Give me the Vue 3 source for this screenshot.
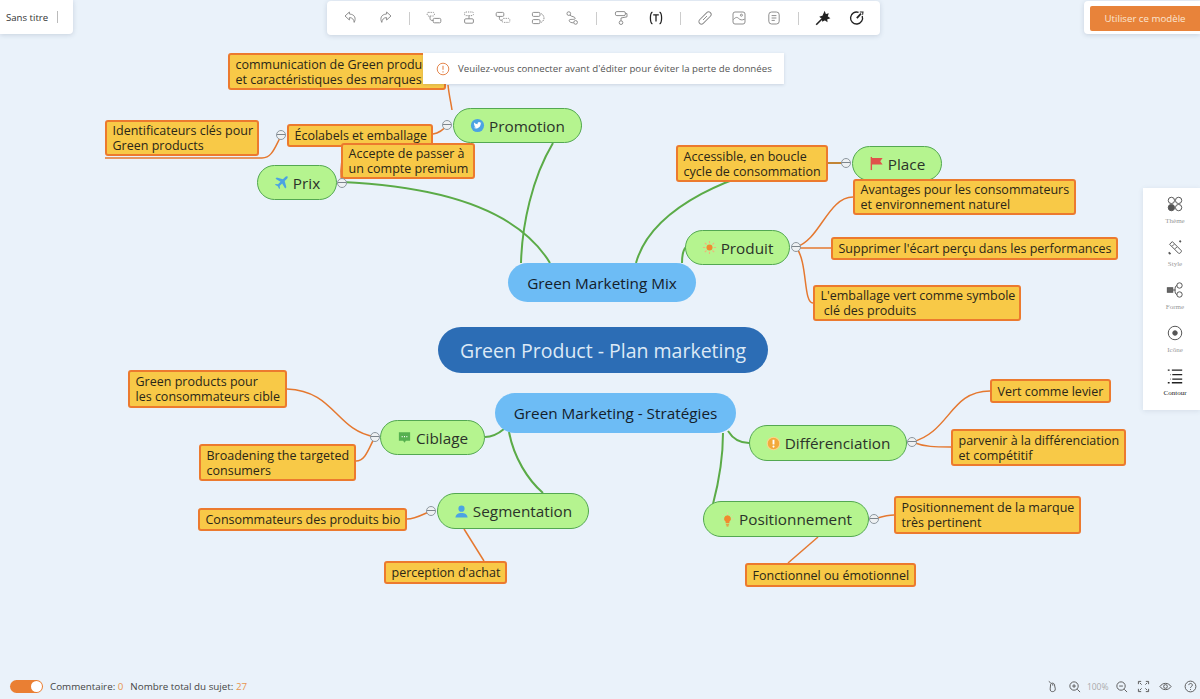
<template>
  <div class="page">
    <div class="canvas">
      <svg class="links" width="1200" height="699" viewBox="0 0 1200 699" fill="none">
        <path v-for="d in greenLinks" :key="d" :d="d" stroke="#5bab47" stroke-width="2" />
        <path v-for="d in orangeLinks" :key="d" :d="d" stroke="#e5782f" stroke-width="1.5" />
      </svg>

      <div
        v-for="t in topics"
        :key="t.text"
        :class="['topic', t.kind]"
        :style="{ left: t.x + 'px', top: t.y + 'px', width: t.w + 'px', height: t.h + 'px' }"
      >
        <svg v-if="t.icon === 'twitter'" class="mark" viewBox="0 0 16 16">
          <circle cx="8" cy="8" r="7" fill="#4ba3e3" />
          <path d="M12.3 5.2c-.3.2-.7.3-1 .3.4-.2.6-.5.8-.9-.3.2-.7.3-1.1.4a1.7 1.7 0 0 0-2.9 1.6C6.7 6.5 5.4 5.8 4.5 4.7c-.5.8-.2 1.8.5 2.3-.3 0-.5-.1-.8-.2 0 .8.6 1.500 1.400 1.700-.3.1-.5.1-.8 0 .2.700.9 1.200 1.600 1.200-.7.500-1.500.8-2.500.7 2.300 1.500 7.200.9 7.600-4.600.3-.2.6-.4.8-.6z" fill="#fff" />
        </svg>
        <svg v-else-if="t.icon === 'plane'" class="mark" viewBox="0 0 16 16">
          <path d="M14.5 1.6c-.8-.6-2-.1-2.8.7L9.500 4.500 3 2.700 1.600 4l5.300 3.200-2.600 2.700-2.400-.4L1 10.400l3 1.500L5.500 15l.9-.9-.4-2.500 2.700-2.500 3.200 5.300 1.300-1.400-1.800-6.500 2.200-2.200c.8-.8 1.300-1.800.9-2.700z" fill="#4ba3e3" />
        </svg>
        <svg v-else-if="t.icon === 'flag'" class="mark" viewBox="0 0 16 16">
          <path d="M2.5 1v14" stroke="#e0524a" stroke-width="1.5" />
          <path d="M3 2h11.500l-2.500 3.500 2.500 3.500H3z" fill="#e0524a" />
        </svg>
        <svg v-else-if="t.icon === 'sun'" class="mark" viewBox="0 0 16 16">
          <circle cx="8" cy="8" r="3.2" fill="#f08a2e" />
          <path d="M8 1v2.500M8 12.500V15M1 8h2.500M12.500 8H15M3 3l1.800 1.800M11.200 11.200 13 13M3 13l1.800-1.800M11.200 4.800 13 3" stroke="#f3b27a" stroke-width="1.2" />
        </svg>
        <svg v-else-if="t.icon === 'chat'" class="mark" viewBox="0 0 16 16">
          <path d="M2 2.500h12v9H9.500L8 13.500l-1.500-2H2z" fill="#56b04f" />
          <path d="M5 7h1M7.500 7h1M10 7h1" stroke="#fff" stroke-width="1.3" />
        </svg>
        <svg v-else-if="t.icon === 'person'" class="mark" viewBox="0 0 16 16">
          <circle cx="8" cy="5" r="3.3" fill="#4ba3e3" />
          <path d="M1.500 14.500c.3-3.500 3-5 6.500-5s6.200 1.500 6.500 5z" fill="#4ba3e3" />
        </svg>
        <svg v-else-if="t.icon === 'warn'" class="mark" viewBox="0 0 16 16">
          <circle cx="8" cy="8" r="6.7" fill="#f2a93b" stroke="#f8d68c" stroke-width="1.2" />
          <path d="M8 4v5" stroke="#fff" stroke-width="2" />
          <circle cx="8" cy="11.3" r="1.1" fill="#fff" />
        </svg>
        <svg v-else-if="t.icon === 'bulb'" class="mark" viewBox="0 0 16 16">
          <path d="M8 3.500a3.700 3.700 0 0 0-2 6.800V12h4v-1.700a3.700 3.700 0 0 0-2-6.800z" fill="#f08a2e" />
          <path d="M6.300 13.600h3.400M7 15h2" stroke="#f08a2e" stroke-width="1.1" />
          <path d="M8 .5v1.500M2.700 2.600l1 1M13.300 2.600l-1 1M1.500 7.500H3M13 7.500h1.500" stroke="#f3c9a0" stroke-width="1" />
        </svg>
        <span>{{ t.text }}</span>
      </div>

      <span
        v-for="f in folds"
        :key="f.x + '-' + f.y"
        class="fold"
        :style="{ left: f.x - 5 + 'px', top: f.y - 5 + 'px' }"
      ></span>

      <div class="notice">
        <svg width="14" height="14" viewBox="0 0 14 14" fill="none">
          <circle cx="7" cy="7" r="5.8" stroke="#e5884f" stroke-width="1" />
          <path d="M7 3.800v4M7 9.300v1.200" stroke="#e5884f" stroke-width="1.1" />
        </svg>
        <span>Veuilez-vous connecter avant d'éditer pour éviter la perte de données</span>
      </div>
    </div>

    <div class="chrome">
      <div class="top-row">
        <div class="title-box">
          <span>Sans titre</span>
          <i class="title-sep"></i>
        </div>

        <div class="toolbar">
          <svg class="tool" viewBox="0 0 20 20"><path d="M8 2.500 2.500 7.500l5.500 5V9.500c3.500 0 5.500 2 6 6 2.500-5 1-10-6-10.500z" /></svg>
          <svg class="tool" viewBox="0 0 20 20"><path d="M12 2.500l5.500 5-5.500 5V9.500c-3.500 0-5.500 2-6 6-2.500-5-1-10 6-10.500z" /></svg>
          <i class="tool-sep"></i>
          <svg class="tool" viewBox="0 0 20 20"><rect x="1.500" y="3" width="9" height="4.500" rx="1.500" stroke-dasharray="1.500 1.300" /><path d="M5 7.500v3c0 1.500 1 2.500 2.500 2.500H9" /><rect x="9" y="10.500" width="9.500" height="5.500" rx="1.500" /></svg>
          <svg class="tool" viewBox="0 0 20 20"><rect x="4.500" y="2.500" width="11" height="4.500" rx="1.500" stroke-dasharray="1.500 1.300" /><path d="M10 7v4" /><rect x="4.500" y="11" width="11" height="5.500" rx="1.500" /></svg>
          <svg class="tool" viewBox="0 0 20 20"><rect x="1.500" y="3" width="9.500" height="5" rx="1.500" /><path d="M5.500 8v2.500c0 1.500 1 2.500 2.500 2.500h1" /><rect x="9" y="10.500" width="9.500" height="5" rx="1.500" stroke-dasharray="1.500 1.300" /></svg>
          <svg class="tool" viewBox="0 0 20 20"><rect x="3" y="3" width="9.500" height="5" rx="1.500" /><rect x="3" y="12" width="9.500" height="5" rx="1.500" /><path d="M14 4.500c2.500 1.500 3.500 3.500 3.500 5.500s-1 4-3.500 5.500" stroke-dasharray="2 1" /></svg>
          <svg class="tool" viewBox="0 0 20 20"><circle cx="6" cy="4.500" r="2.300" /><circle cx="14.500" cy="15.500" r="2.300" /><path d="M7.500 6.500c1.500 2 6.500 1.500 6.500 4s-7.500 0-7.500 2.500 3 3 5.500 3" /></svg>
          <i class="tool-sep"></i>
          <svg class="tool" viewBox="0 0 20 20"><rect x="3" y="2" width="12.500" height="5" rx="1.800" /><path d="M15.500 4.500h2v4L10 10v3.500" /><circle cx="10" cy="15.800" r="2.300" /></svg>
          <svg class="tool dark" viewBox="0 0 20 20"><path d="M5.500 2.500C3.500 3.500 3 5.500 3 10s.5 6.500 2.500 7.500M14.500 2.500c2 1 2.500 3 2.500 7.500s-.5 6.500-2.500 7.500M6.500 6h7M10 6v8.500" /></svg>
          <i class="tool-sep"></i>
          <svg class="tool" viewBox="0 0 20 20"><rect x="6.800" y="0.500" width="6.400" height="19" rx="3.200" transform="rotate(45 10 10)" /><path d="M7.500 12.500 12.500 7.500" /></svg>
          <svg class="tool" viewBox="0 0 20 20"><rect x="2.500" y="2.500" width="15" height="15" rx="2.500" /><circle cx="13" cy="6.500" r="1.300" /><path d="M3 12c2.500-3 4.500-3.500 6.500-1.500s4 2.500 7.500 1" /></svg>
          <svg class="tool" viewBox="0 0 20 20"><rect x="3.500" y="2.500" width="13" height="15" rx="3.500" /><path d="M7 7h6M7 10h6M7 13h4" /></svg>
          <i class="tool-sep"></i>
          <svg class="tool dark" viewBox="0 0 20 20"><path d="M1.500 18.500 9 11" stroke-width="2" /><path d="M12 3l1 3 3-.8-1 3 2.500 1.800-3 1 .2 2.800-2.500-1.800-2.500 1.500-.3-3-2.400-1.800 2.900-1z" fill="#222" /></svg>
          <svg class="tool dark" viewBox="0 0 20 20"><path d="M16.500 7.500A7.500 7.500 0 1 1 12 3" stroke-width="1.700" /><path d="m9.800 10.200 5.200-5.700" stroke-width="2.200" /><path d="M13.500 2.500 17.500 2.500 17 6" stroke-width="1.300" /></svg>
        </div>

        <div class="use-box">
          <button class="use-btn">Utiliser ce modèle</button>
        </div>
      </div>

      <div class="side-panel">
        <div class="side-item">
          <svg class="side-icon" viewBox="0 0 20 20">
            <circle cx="6" cy="6" r="3.500" /><circle cx="14" cy="6" r="3.500" /><circle cx="6" cy="14" r="3.500" fill="#555" /><circle cx="14" cy="14" r="3.500" />
          </svg>
          <span>Thème</span>
        </div>
        <div class="side-item">
          <svg class="side-icon" viewBox="0 0 20 20">
            <path d="m4 7 3-3 10 10c1 1-2 4-3 3zM7 9l2-2M10 12l2-2" /><path d="M3 16l2 2M15 3l1.500 1.500" stroke-width="2" />
          </svg>
          <span>Style</span>
        </div>
        <div class="side-item">
          <svg class="side-icon" viewBox="0 0 20 20">
            <rect x="1.500" y="7.500" width="6" height="5" fill="#666" /><path d="M7.500 10h3M10 10c0-3 .5-5 2.500-5M10 10c0 3 .5 5 2.500 5" /><circle cx="15" cy="5" r="3" /><circle cx="15" cy="15" r="3" />
          </svg>
          <span>Forme</span>
        </div>
        <div class="side-item">
          <svg class="side-icon" viewBox="0 0 20 20">
            <circle cx="10" cy="10" r="7.500" /><circle cx="10" cy="10" r="2.500" fill="#555" />
          </svg>
          <span>Icône</span>
        </div>
        <div class="side-item current">
          <svg class="side-icon" viewBox="0 0 20 20">
            <path d="M2 3.500h2M6.500 3.500H18M7 8.500h11M5 8.500h.5M7 13.500h11M5 13.500h.5M2 17.500h2M6.500 17.500H18" stroke="#222" stroke-width="1.400" />
          </svg>
          <span>Contour</span>
        </div>
      </div>

      <div class="bottom-row">
        <div class="counts">
          <span class="switch"><i></i></span>
          <span>Commentaire: <b>0</b></span>
          <span>Nombre total du sujet: <b>27</b></span>
        </div>
        <div class="view-tools">
          <svg class="view" viewBox="0 0 14 14"><path d="M3 1.500 5 3M5 4.500c0-1.500 3.500-1.500 4 0l1 5c0 2-1 3-3 3s-2.500-1-2.500-3zM7.300 4v2" /></svg>
          <svg class="view" viewBox="0 0 14 14"><circle cx="6.500" cy="6.500" r="4.500" /><path d="m10 10 3 3M4.500 6.500h4M6.500 4.500v4" /></svg>
          <span class="zoom-value">100%</span>
          <svg class="view" viewBox="0 0 14 14"><circle cx="6.500" cy="6.500" r="4.500" /><path d="m10 10 3 3M4.500 6.500h4" /></svg>
          <svg class="view" viewBox="0 0 14 14"><path d="M1.500 4.500v-3h3M9.500 1.500h3v3M12.500 9.500v3h-3M4.500 12.500h-3v-3M3 3l2 2M11 3 9 5M11 11 9 9M3 11l2-2" /></svg>
          <svg class="view" viewBox="0 0 14 14"><path d="M1 7c3-4.500 9-4.500 12 0-3 4.500-9 4.500-12 0z" /><circle cx="7" cy="7" r="2" /></svg>
          <svg class="view help" viewBox="0 0 14 14"><circle cx="7" cy="7" r="5.800" /><path d="M5.200 5.500c0-2.400 3.800-2.300 3.800 0 0 1.500-2 1.500-2 3M7 9.800v1" /></svg>
        </div>
      </div>
    </div>
  </div>
</template>

<script setup>
const topics = [
  { kind: 'root', text: 'Green Product - Plan marketing', x: 438, y: 327, w: 330, h: 46 },
  { kind: 'branch', text: 'Green Marketing Mix', x: 508, y: 263, w: 188, h: 39 },
  { kind: 'branch', text: 'Green Marketing - Stratégies', x: 495, y: 393, w: 241, h: 40 },

  { kind: 'sub', icon: 'twitter', text: 'Promotion', x: 453, y: 108, w: 129, h: 35 },
  { kind: 'sub', icon: 'plane', text: 'Prix', x: 257, y: 165, w: 80, h: 35 },
  { kind: 'sub', icon: 'flag', text: 'Place', x: 852, y: 146, w: 90, h: 35 },
  { kind: 'sub', icon: 'sun', text: 'Produit', x: 685, y: 230, w: 105, h: 35 },
  { kind: 'sub', icon: 'chat', text: 'Ciblage', x: 380, y: 420, w: 105, h: 35 },
  { kind: 'sub', icon: 'person', text: 'Segmentation', x: 437, y: 493, w: 152, h: 36 },
  { kind: 'sub', icon: 'warn', text: 'Différenciation', x: 749, y: 425, w: 158, h: 36 },
  { kind: 'sub', icon: 'bulb', text: 'Positionnement', x: 703, y: 501, w: 166, h: 36 },

  { kind: 'note', text: 'communication de Green products\net caractéristiques des marques', x: 228, y: 53, w: 218, h: 37 },
  { kind: 'note', text: 'Écolabels et emballage', x: 287, y: 124, w: 146, h: 23 },
  { kind: 'note', text: 'Identificateurs clés pour\nGreen products', x: 105, y: 120, w: 154, h: 36 },
  { kind: 'note', text: 'Accepte de passer à\nun compte premium', x: 341, y: 143, w: 134, h: 36 },
  { kind: 'note', text: 'Accessible, en boucle\ncycle de consommation', x: 676, y: 145, w: 152, h: 37 },
  { kind: 'note', text: 'Avantages pour les consommateurs\net environnement naturel', x: 853, y: 179, w: 223, h: 36 },
  { kind: 'note', text: "Supprimer l'écart perçu dans les performances", x: 831, y: 237, w: 287, h: 23 },
  { kind: 'note', text: "L'emballage vert comme symbole\n clé des produits", x: 813, y: 285, w: 208, h: 36 },
  { kind: 'note', text: 'Green products pour\nles consommateurs cible', x: 128, y: 370, w: 159, h: 38 },
  { kind: 'note', text: 'Broadening the targeted\nconsumers', x: 199, y: 444, w: 157, h: 37 },
  { kind: 'note', text: 'Consommateurs des produits bio', x: 198, y: 508, w: 209, h: 23 },
  { kind: 'note', text: "perception d'achat", x: 384, y: 561, w: 123, h: 23 },
  { kind: 'note', text: 'Vert comme levier', x: 990, y: 379, w: 121, h: 24 },
  { kind: 'note', text: 'parvenir à la différenciation\net compétitif', x: 951, y: 429, w: 175, h: 37 },
  { kind: 'note', text: 'Positionnement de la marque\ntrès pertinent', x: 894, y: 496, w: 187, h: 38 },
  { kind: 'note', text: 'Fonctionnel ou émotionnel', x: 745, y: 563, w: 171, h: 24 }
]

const folds = [
  { x: 447, y: 125 },
  { x: 281, y: 135 },
  { x: 342, y: 183 },
  { x: 846, y: 163 },
  { x: 796, y: 247 },
  { x: 375, y: 437 },
  { x: 431, y: 511 },
  { x: 912, y: 442 },
  { x: 874, y: 519 }
]

const greenLinks = [
  'M553 143C532 178 522 225 521 263',
  'M342 182C430 186 515 205 550 263',
  'M846 163H800C740 170 652 205 636 263',
  'M682 263C682 254 683 250 686 247',
  'M485 437C493 437 498 434 504 429',
  'M509 432C514 458 528 480 543 493',
  'M728 431C733 439 740 443 749 443',
  'M723 433C723 460 718 485 713 504',
  'M582 126H579',
  'M589 511H586',
  'M703 519H706'
]

const orangeLinks = [
  'M448 85C449 95 451 103 452 110',
  'M433 134C440 133 444 129 447 125',
  'M105 158H262C272 158 275 147 281 136',
  'M342 182C340 175 341 165 343 155',
  'M828 163H846',
  'M796 247C820 240 828 197 853 197',
  'M796 248H831',
  'M796 247C808 262 803 303 813 303',
  'M287 389C335 391 335 430 375 437',
  'M356 461C366 461 369 447 375 437',
  'M407 519C416 519 423 514 431 511',
  'M464 529L484 561',
  'M912 442C950 432 950 391 990 391',
  'M912 442C925 447 935 447 951 447',
  'M874 519C881 517 886 515 894 515',
  'M818 537L788 563'
]
</script>

<style>
html,
body {
  margin: 0;
  background: #eaf2fa;
}
</style>

<style scoped>
.page {
  position: relative;
  width: 1200px;
  height: 699px;
  overflow: hidden;
  background: #eaf2fa;
  font-family: "Open Sans", "Noto Sans", sans-serif;
  color: #222;
}

.canvas {
  position: absolute;
  inset: 0;
}

.links {
  position: absolute;
  left: 0;
  top: 0;
}

.topic {
  position: absolute;
  box-sizing: border-box;
  display: flex;
  align-items: center;
  justify-content: center;
  gap: 4px;
}

.root {
  background: #2c6db5;
  border-radius: 23px;
  color: #dce9f6;
  font-size: 19.5px;
}

.branch {
  background: #6dbcf5;
  border-radius: 20px;
  color: #14202b;
  font-size: 15.3px;
}

.sub {
  background: #b5f48f;
  border: 1.5px solid #53a851;
  border-radius: 18px;
  color: #2b332a;
  font-size: 15.3px;
}

.note {
  justify-content: flex-start;
  padding-left: 5.5px;
  background: #f8c947;
  border: 2px solid #ec7a2e;
  border-radius: 3px;
  color: #2a2618;
  font-size: 12.5px;
  line-height: 15px;
  white-space: pre;
  overflow: hidden;
}

.mark {
  width: 15px;
  height: 15px;
  flex: none;
}

.fold {
  position: absolute;
  box-sizing: border-box;
  width: 10px;
  height: 10px;
  border: 1px solid #8d979f;
  border-radius: 50%;
  background: linear-gradient(#eef1f3 0 3.5px, #7d868d 3.5px 4.5px, #eef1f3 4.5px);
}

.notice {
  position: absolute;
  left: 423px;
  top: 53px;
  box-sizing: border-box;
  width: 361px;
  height: 31px;
  display: flex;
  align-items: center;
  gap: 8px;
  padding-left: 13px;
  background: #fff;
  box-shadow: 0 1px 3px rgba(60, 80, 110, 0.18);
  font-size: 9.7px;
  color: #555;
  white-space: nowrap;
}

.chrome {
  position: absolute;
  inset: 0;
  display: flex;
  flex-direction: column;
  pointer-events: none;
}

.top-row {
  display: flex;
  align-items: flex-start;
}

.title-box {
  box-sizing: border-box;
  width: 73px;
  height: 34px;
  display: flex;
  align-items: center;
  padding-left: 6px;
  background: #fff;
  border-radius: 0 0 4px 0;
  box-shadow: 0 1px 5px rgba(60, 80, 110, 0.2);
  font-size: 9.6px;
  color: #333;
}

.title-sep {
  width: 1px;
  height: 12px;
  margin-left: 9px;
  background: #bbb;
}

.toolbar {
  box-sizing: border-box;
  width: 553px;
  height: 34px;
  margin: 1px 0 0 254px;
  display: flex;
  align-items: center;
  gap: 18.5px;
  padding-left: 15.5px;
  background: #fff;
  border-radius: 4px;
  box-shadow: 0 1px 5px rgba(60, 80, 110, 0.2);
}

.tool {
  width: 16px;
  height: 16px;
  flex: none;
  fill: none;
  stroke: #8a8a8a;
  stroke-width: 1.2;
}

.tool.dark {
  stroke: #222;
  stroke-width: 1.6;
}

.tool-sep {
  width: 1px;
  height: 13px;
  flex: none;
  margin: 0 -2.5px;
  background: #ccc;
}

.use-box {
  box-sizing: border-box;
  width: 116px;
  height: 33px;
  margin: 1px 0 0 auto;
  padding: 4px 0 4px 6px;
  background: #fff;
  border-radius: 4px 0 0 4px;
  box-shadow: 0 1px 5px rgba(60, 80, 110, 0.2);
}

.use-btn {
  width: 100%;
  height: 25px;
  padding: 0;
  border: none;
  border-radius: 2px 0 0 2px;
  background: #e8833a;
  color: #fbe6d2;
  font-family: inherit;
  font-size: 9.7px;
}

.side-panel {
  box-sizing: border-box;
  width: 57px;
  height: 222px;
  margin: 153px 0 0 auto;
  display: flex;
  flex-direction: column;
  align-items: center;
  padding: 7px 0 0 7px;
  background: #fff;
  box-shadow: 0 1px 5px rgba(60, 80, 110, 0.12);
}

.side-item {
  height: 44.3px;
  display: flex;
  flex-direction: column;
  align-items: center;
  font-family: "Liberation Serif", serif;
  font-size: 7px;
  line-height: 9px;
  color: #999;
}

.side-item.current {
  color: #222;
}

.side-icon {
  width: 18px;
  height: 18px;
  margin: 0 0 4px;
  fill: none;
  stroke: #555;
  stroke-width: 1.1;
}

.bottom-row {
  margin-top: auto;
  height: 26px;
  display: flex;
  align-items: center;
  justify-content: space-between;
  padding: 0 3.5px 0 10px;
  font-size: 9.8px;
  color: #444;
}

.counts {
  display: flex;
  align-items: center;
  gap: 7px;
}

.counts b {
  font-weight: 400;
  color: #e8964f;
}

.switch {
  position: relative;
  width: 33px;
  height: 13px;
  border-radius: 7px;
  background: #ea7f33;
}

.switch i {
  position: absolute;
  right: 1px;
  top: 1px;
  width: 11px;
  height: 11px;
  border-radius: 50%;
  background: #fff;
}

.view-tools {
  display: flex;
  align-items: center;
  gap: 9px;
}

.view {
  width: 13px;
  height: 13px;
  fill: none;
  stroke: #555;
  stroke-width: 1;
}

.view.help {
  margin-left: 3px;
}

.zoom-value {
  margin: 0 -3px;
  font-size: 8.5px;
  color: #aaa;
}
</style>
